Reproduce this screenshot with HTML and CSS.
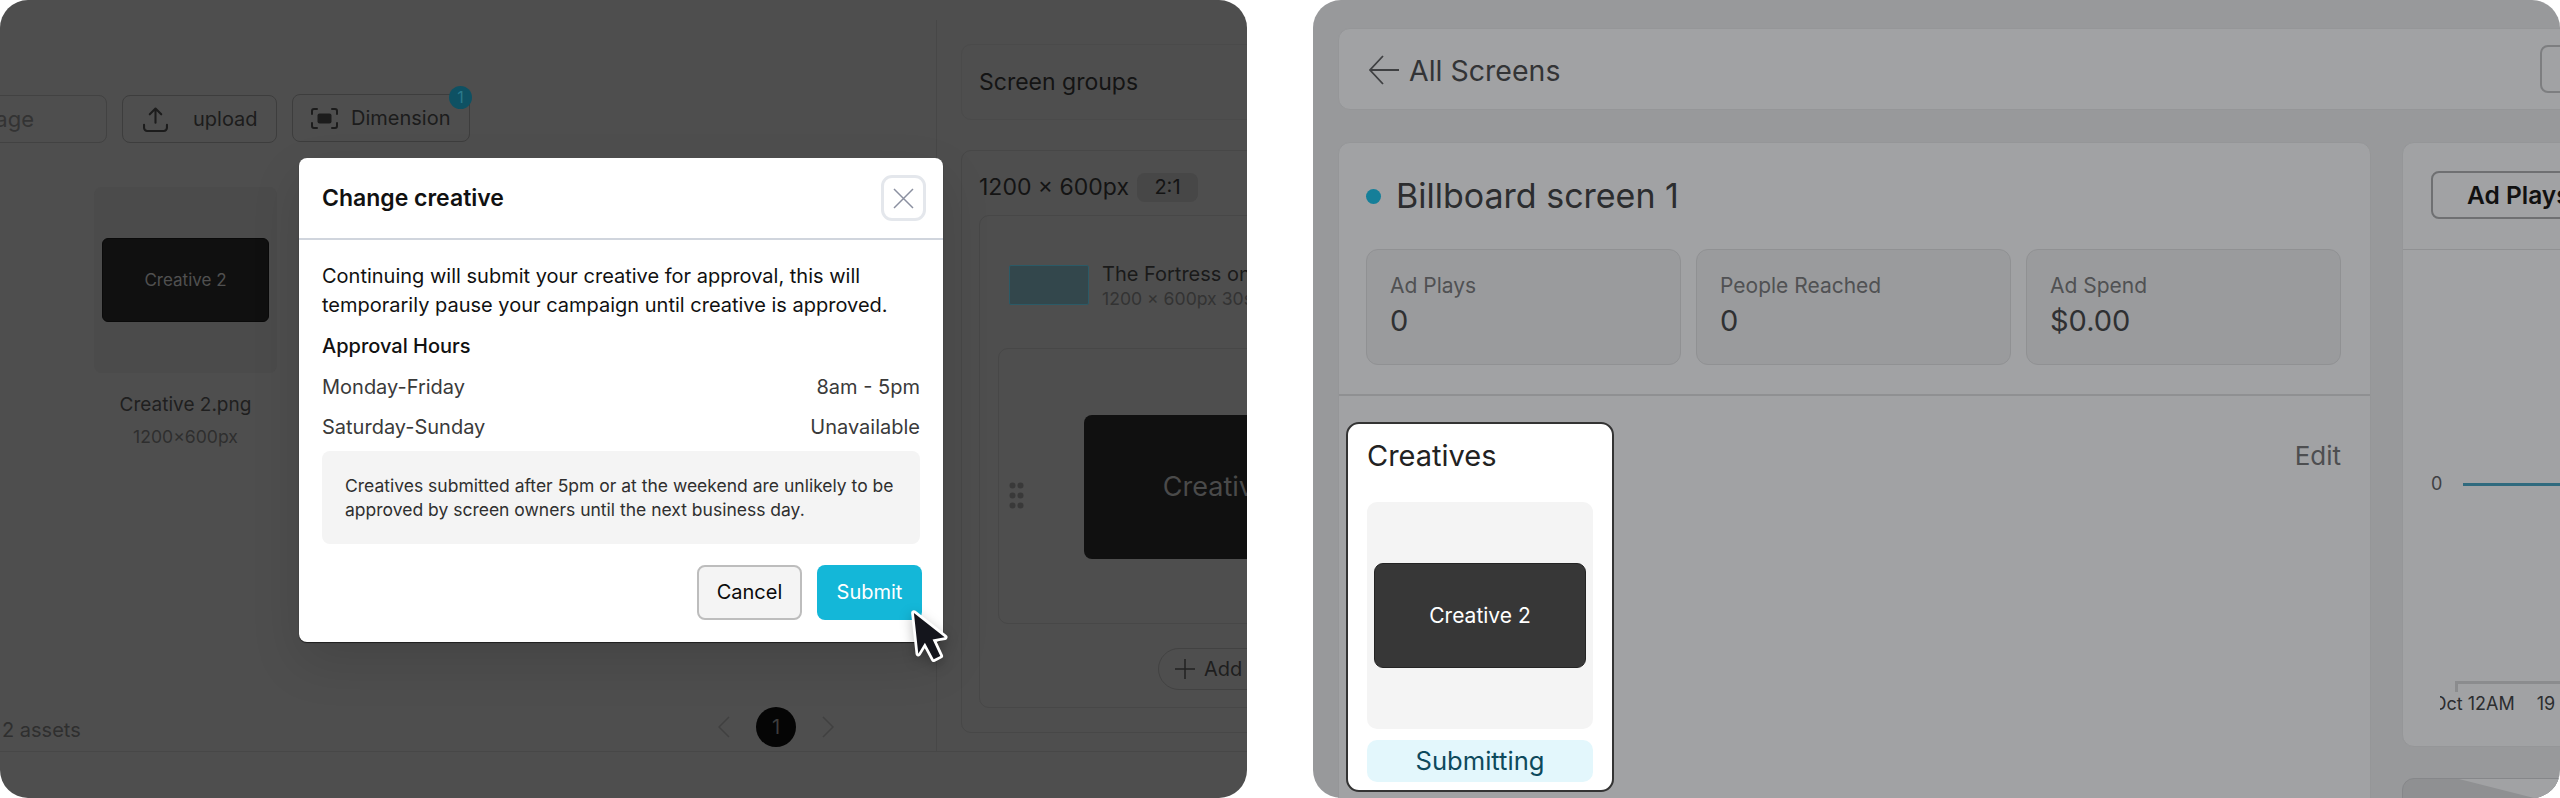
FILE: index.html
```html
<!DOCTYPE html>
<html lang="en">
<head>
<meta charset="utf-8">
<title>Change creative</title>
<link rel="stylesheet" href="styles.css">
</head>
<body>
<section class="panel panel-dark">
  <div class="dark-inner">
    <div class="assets">
      <div class="toolbar">
        <div class="search">Search by image</div>
        <div class="tool tool-upload">
          <svg class="ico-upload" viewBox="0 0 24 24" fill="none" stroke="#1c1c1c" stroke-width="2" stroke-linecap="round" stroke-linejoin="round"><path d="M12 15V1.5M6.5 7 12 1.5 17.500 7"/><path d="M1 17v3a3 3 0 0 0 3 3h16a3 3 0 0 0 3-3v-3"/></svg>
          <span>upload</span>
        </div>
        <div class="tool tool-dim">
          <svg class="ico-dim" viewBox="0 0 27 21" fill="none" stroke="#1c1c1c" stroke-width="2" stroke-linecap="round"><path d="M6 1H3a2 2 0 0 0-2 2v3M21 1h3a2 2 0 0 1 2 2v3M6 20H3a2 2 0 0 1-2-2v-3M21 20h3a2 2 0 0 0 2-2v-3"/><rect x="6.500" y="5.500" width="14" height="10" rx="2" fill="#1c1c1c" stroke="none"/></svg>
          <span>Dimension</span>
          <b class="badge">1</b>
        </div>
      </div>
      <div class="asset">
        <div class="asset-tile"><div class="asset-thumb">Creative 2</div></div>
        <div class="asset-name">Creative 2.png</div>
        <div class="asset-size">1200×600px</div>
      </div>
      <div class="asset-foot">
        <div class="count">2 assets</div>
        <div class="pager">
          <svg class="chev" viewBox="0 0 12 24" fill="none" stroke="#404040" stroke-width="1.500"><path d="M11 2 1 12l10 10"/></svg>
          <div class="page">1</div>
          <svg class="chev" viewBox="0 0 12 24" fill="none" stroke="#404040" stroke-width="1.500"><path d="m1 2 10 10L1 22"/></svg>
        </div>
      </div>
    </div>
    <div class="groups">
      <div class="groups-head">Screen groups</div>
      <div class="group">
        <div class="group-title"><span>1200 × 600px</span><span class="ratio">2:1</span></div>
        <div class="group-body">
          <div class="campaign">
            <div class="campaign-thumb"></div>
            <div>
              <div class="campaign-name">The Fortress on the hill</div>
              <div class="campaign-meta">1200 × 600px 30s</div>
            </div>
          </div>
          <div class="slot">
            <svg class="grip" viewBox="0 0 15 27" fill="#393939"><circle cx="3.500" cy="3.500" r="3"/><circle cx="11.500" cy="3.500" r="3"/><circle cx="3.500" cy="13.500" r="3"/><circle cx="11.500" cy="13.500" r="3"/><circle cx="3.500" cy="23.500" r="3"/><circle cx="11.500" cy="23.500" r="3"/></svg>
            <div class="slot-thumb">Creative 2</div>
          </div>
          <div class="add-row">
            <div class="add">
              <svg class="plus" viewBox="0 0 20 20" fill="none" stroke="#222" stroke-width="1.500"><path d="M10 0v20M0 10h20"/></svg>
              <span>Add creative</span>
            </div>
          </div>
        </div>
      </div>
    </div>
  </div>

  <div class="modal">
    <header class="modal-head">
      <h2>Change creative</h2>
      <div class="close">
        <svg viewBox="0 0 21 21" fill="none" stroke="#8b90a0" stroke-width="1.500"><path d="m1 1 19 19M20 1 1 20"/></svg>
      </div>
    </header>
    <div class="modal-body">
      <p class="lead">Continuing will submit your creative for approval, this will temporarily pause your campaign until creative is approved.</p>
      <div class="hours-title">Approval Hours</div>
      <div class="hours hours-first"><span>Monday-Friday</span><span>8am - 5pm</span></div>
      <div class="hours hours-next"><span>Saturday-Sunday</span><span>Unavailable</span></div>
      <div class="note">Creatives submitted after 5pm or at the weekend are unlikely to be approved by screen owners until the next business day.</div>
      <div class="actions">
        <div class="btn btn-cancel">Cancel</div>
        <div class="btn btn-submit">Submit</div>
      </div>
    </div>
  </div>

  <svg class="cursor" viewBox="0 0 50 60"><path d="M9 10 37 32 26 34 33 49 27 52 19 37 13 47Z" fill="#14151c" stroke="#fff" stroke-width="5" stroke-linejoin="round" paint-order="stroke"/></svg>
</section>

<section class="panel panel-light">
  <div class="topbar">
    <div class="back">
      <svg class="arrow" viewBox="0 0 30 30" fill="none" stroke="#3f4042" stroke-width="1.800"><path d="M30 15H1M14 1 1 15l13 14"/></svg>
      <span>All Screens</span>
    </div>
    <div class="topbtn"></div>
  </div>
  <div class="columns">
    <div class="screen">
      <div class="screen-title"><i class="dot"></i><h1>Billboard screen 1</h1></div>
      <div class="stats">
        <div class="stat"><div class="stat-label">Ad Plays</div><div class="stat-value">0</div></div>
        <div class="stat"><div class="stat-label">People Reached</div><div class="stat-value">0</div></div>
        <div class="stat"><div class="stat-label">Ad Spend</div><div class="stat-value">$0.00</div></div>
      </div>
      <div class="creatives">
        <div class="creative-col">
          <div class="spot">
            <h3>Creatives</h3>
            <div class="spot-tile"><div class="spot-thumb">Creative 2</div></div>
            <div class="spot-status">Submitting</div>
          </div>
          <div class="spot-name">Creative 2.png</div>
        </div>
        <div class="edit">Edit</div>
      </div>
    </div>
    <div class="side">
      <div class="chart">
        <div class="chart-head"><div class="metric">Ad Plays</div></div>
        <div class="series"><span class="y0">0</span><i class="line"></i></div>
        <div class="axis"></div>
        <div class="ticks"><div class="ticks-in"><span>10 Oct 12AM</span><span>19</span></div></div>
      </div>
      <div class="side-next">
        <svg class="wedge" viewBox="0 0 158 20" preserveAspectRatio="none"><polygon points="56,0 135,20 158,20 158,0" fill="#a1a2a4"/></svg>
      </div>
    </div>
  </div>
</section>
</body>
</html>
```
FILE: styles.css
```css
* { box-sizing: border-box; }
html, body { margin: 0; height: 798px; overflow: hidden; background: #fff; }
body {
  display: flex;
  gap: 66px;
  font-family: Inter, "Liberation Sans", sans-serif;
  color: #222;
}
h1, h2, h3, p { margin: 0; font-weight: 400; }

.panel {
  position: relative;
  width: 1247px;
  height: 798px;
  flex: none;
  overflow: hidden;
  border-radius: 28px;
}

/* dark panel */
.panel-dark { background: #4e4e4e; padding-top: 20px; }
.dark-inner {
  display: flex;
  height: 732px;
  border-bottom: 1px solid #474747;
}
.assets {
  width: 937px;
  flex: none;
  display: flex;
  flex-direction: column;
  border-right: 1px solid #474747;
  padding-top: 74px;
}
.toolbar { display: flex; align-items: flex-start; gap: 15px; }
.search {
  width: 300px;
  margin-left: -193px;
  height: 48px;
  line-height: 46px;
  border: 1px solid #424242;
  border-radius: 8px;
  text-align: right;
  padding-right: 72px;
  font-size: 22px;
  color: #333;
  white-space: nowrap;
  overflow: hidden;
  margin-top: 1px;
}
.tool {
  position: relative;
  height: 48px;
  display: flex;
  align-items: center;
  border: 1px solid #3d3d3d;
  border-radius: 8px;
  font-size: 20px;
  font-weight: 400;
  color: #1c1c1c;
}
.tool-upload { width: 155px; padding-left: 20px; gap: 25px; margin-top: 1px; }
.tool-dim { width: 178px; padding-left: 18px; gap: 13px; }
.ico-upload { width: 25px; height: 25px; flex: none; }
.ico-dim { width: 27px; height: 21px; flex: none; }
.badge {
  position: absolute;
  right: -3px;
  top: -9px;
  width: 23px;
  height: 23px;
  border-radius: 50%;
  background: #0e5163;
  color: #2a7a8c;
  font-size: 16px;
  font-weight: 400;
  text-align: center;
  line-height: 23px;
}
.asset { width: 183px; margin: 44px 0 0 94px; text-align: center; }
.asset-tile {
  height: 186px;
  background: #4b4b4b;
  border-radius: 8px;
  display: flex;
  align-items: center;
  justify-content: center;
}
.asset-thumb {
  width: 167px;
  height: 84px;
  background: #101010;
  border-radius: 6px;
  border: 1px solid #0a0a0a;
  color: #505050;
  font-size: 17px;
  line-height: 82px;
}
.asset-name { margin-top: 21px; font-size: 19px; line-height: 22px; color: #1f1f1f; white-space: nowrap; }
.asset-size { margin-top: 11px; font-size: 17.600px; line-height: 20px; color: #2e2e2e; }
.asset-foot {
  margin-top: auto;
  height: 48px;
  display: flex;
  align-items: center;
}
.count { width: 718px; padding: 6px 0 0 2px; font-size: 20px; color: #2f2f2f; flex: none; }
.pager { display: flex; align-items: center; }
.chev { width: 12px; height: 24px; flex: none; }
.page {
  width: 40px;
  height: 40px;
  margin: 0 26px 0 26px;
  border-radius: 50%;
  background: #050505;
  color: #3d3d3d;
  font-size: 20px;
  line-height: 40px;
  text-align: center;
}
.groups { flex: none; width: 420px; padding: 24px 0 0 24px; }
.groups-head {
  height: 76px;
  line-height: 74px;
  padding-left: 17px;
  font-size: 23px;
  color: #141414;
  border: 1px solid #4a4a4a;
  border-radius: 10px;
}
.group {
  margin-top: 30px;
  height: 583px;
  padding: 21px 0 0 17px;
  border: 1px solid #474747;
  border-radius: 10px;
}
.group-title { display: flex; align-items: center; gap: 8px; height: 30px; font-size: 23px; color: #141414; white-space: nowrap; }
.ratio {
  width: 61px;
  height: 29px;
  line-height: 29px;
  text-align: center;
  border-radius: 8px;
  background: #474747;
  font-size: 20px;
}
.group-body {
  margin-top: 13px;
  height: 493px;
  border: 1px solid #474747;
  border-radius: 10px;
  padding-top: 49px;
}
.campaign { display: flex; gap: 13px; padding-left: 29px; height: 40px; white-space: nowrap; }
.campaign-thumb { width: 80px; height: 40px; flex: none; background: #33474c; border: 1px solid #2b5a66; border-radius: 2px; }
.campaign-name { font-size: 20px; line-height: 20px; font-weight: 400; color: #1a1a1a; margin-top: -1px; }
.campaign-meta { font-size: 17.600px; line-height: 20px; margin-top: 5px; color: #333; }
.slot {
  margin: 43px 0 0 18px;
  height: 276px;
  border: 1px solid #474747;
  border-radius: 10px;
  display: flex;
  align-items: center;
  padding-left: 10px;
}
.grip { width: 15px; height: 27px; flex: none; margin-right: 60px; margin-top: 18px; }
.slot-thumb {
  width: 288px;
  height: 144px;
  flex: none;
  background: #101010;
  border-radius: 8px;
  font-size: 27px;
  line-height: 144px;
  text-align: center;
  color: #4a4a4a;
  margin-top: 2px;
}
.add-row { margin-top: 24px; padding-left: 178px; }
.add {
  display: flex;
  align-items: center;
  gap: 9px;
  width: 190px;
  height: 42px;
  padding-left: 16px;
  border: 1px solid #424242;
  border-radius: 21px;
  font-size: 20px;
  color: #1e1e1e;
  white-space: nowrap;
}
.plus { width: 20px; height: 20px; flex: none; }

/* modal */
.modal {
  position: absolute;
  left: 299px;
  top: 158px;
  width: 644px;
  background: #fff;
  border-radius: 8px;
  box-shadow: 0 1px 1px #1e1e1e, 0 20px 50px rgba(0, 0, 0, 0.12);
}
.modal-head {
  height: 82px;
  display: flex;
  align-items: center;
  justify-content: space-between;
  padding: 0 17px 0 23px;
  border-bottom: 2px solid #d0d5dd;
}
.modal-head h2 { font-size: 23px; font-weight: 600; color: #111; }
.close {
  width: 45px;
  height: 46px;
  border: 3px solid #e4e7ec;
  border-radius: 11px;
  display: flex;
  align-items: center;
  justify-content: center;
}
.close svg { width: 21px; height: 21px; }
.modal-body { padding: 22px 23px 22px; font-size: 20px; color: #111; }
.lead { line-height: 29px; }
.hours-title { margin-top: 13px; line-height: 26px; font-weight: 450; }
.hours { display: flex; justify-content: space-between; line-height: 26px; color: #3a3a3a; }
.hours-first { margin-top: 15px; }
.hours-next { margin-top: 14px; }
.note {
  margin-top: 11px;
  height: 93px;
  padding: 23px 23px 0;
  background: #f4f4f4;
  border-radius: 8px;
  font-size: 17.500px;
  line-height: 23.500px;
  color: #2f2f2f;
}
.actions { display: flex; justify-content: flex-end; gap: 15px; margin: 21px -2px 0 0; }
.btn { width: 105px; height: 55px; line-height: 53px; text-align: center; border-radius: 8px; border: 1px solid transparent; }
.btn-cancel { background: #f4f4f4; border: 2px solid #bdbdbd; line-height: 51px; color: #0a0a0a; }
.btn-submit { background: #14b7d8; color: #fff; }
.cursor {
  position: absolute;
  left: 904px;
  top: 602px;
  width: 55px;
  height: 66px;
  filter: drop-shadow(0 4px 6px rgba(0, 0, 0, 0.25));
}

/* light panel */
.panel-light { background: #98999b; padding: 28px 0 0 25px; }
.topbar {
  width: 1303px;
  height: 82px;
  display: flex;
  align-items: center;
  background: #a1a2a4;
  border: 1px solid #959698;
  border-radius: 12px;
}
.back { flex: 1; display: flex; align-items: center; gap: 10px; padding: 2px 0 0 30px; font-size: 28.500px; color: #333436; }
.arrow { width: 30px; height: 30px; flex: none; }
.topbtn { width: 100px; height: 48px; border: 2px solid #7d7e80; border-radius: 8px; }
.columns { display: flex; gap: 31px; margin-top: 32px; }
.screen {
  width: 1033px;
  height: 700px;
  flex: none;
  background: #a1a2a4;
  border: 1px solid #959698;
  border-radius: 12px;
}
.screen-title { display: flex; align-items: center; gap: 15px; padding: 33px 0 0 27px; }
.dot { width: 15px; height: 15px; border-radius: 50%; background: #157f99; flex: none; }
.screen-title h1 { font-size: 34px; line-height: 40px; color: #2c2d2f; }
.stats { display: flex; gap: 15px; margin: 33px 0 0 27px; }
.stat {
  width: 315px;
  height: 116px;
  padding: 24px 23px 0;
  background: #9a9b9d;
  border: 1px solid #909193;
  border-radius: 12px;
}
.stat-label { font-size: 21px; line-height: 24px; color: #505153; }
.stat-value { margin-top: 5px; font-size: 29px; line-height: 36px; color: #2f3032; }
.creatives {
  margin-top: 29px;
  padding: 26px 29px 0 7px;
  border-top: 2px solid #8f9092;
  display: flex;
  justify-content: space-between;
  align-items: flex-start;
}
.creative-col { width: 268px; text-align: center; }
.spot {
  height: 370px;
  padding: 16px 19px 0;
  background: #fff;
  border: 2px solid #333;
  border-radius: 13px;
  text-align: left;
}
.spot h3 { font-size: 29px; line-height: 32px; font-weight: 400; color: #222; }
.spot-tile {
  margin-top: 30px;
  height: 227px;
  background: #f4f4f4;
  border-radius: 10px;
  display: flex;
  align-items: center;
  justify-content: center;
}
.spot-thumb {
  width: 212px;
  height: 105px;
  background: #373737;
  border: 1px solid #242424;
  border-radius: 9px;
  color: #fff;
  font-size: 21px;
  line-height: 103px;
  text-align: center;
  margin-top: -1px;
}
.spot-status {
  margin-top: 11px;
  height: 42px;
  line-height: 42px;
  border-radius: 10px;
  background: #e3f7fc;
  color: #0e4a5c;
  font-size: 25.600px;
  text-align: center;
}
.spot-name { margin-top: 3px; font-size: 18px; line-height: 22px; color: #55565a; white-space: nowrap; }
.edit { margin-top: 19px; font-size: 26px; line-height: 30px; color: #4d4e50; }
.side { flex: none; width: 200px; display: flex; flex-direction: column; gap: 31px; }
.chart {
  height: 605px;
  background: #a1a2a4;
  border: 1px solid #959698;
  border-radius: 12px;
  overflow: hidden;
}
.chart-head { height: 107px; padding: 28px 0 0 28px; border-bottom: 1px solid #909193; }
.metric {
  width: 190px;
  height: 48px;
  line-height: 44px;
  padding-left: 34px;
  border: 2px solid #6f7072;
  border-radius: 8px;
  font-size: 24.500px;
  font-weight: 600;
  color: #111;
  white-space: nowrap;
}
.series { display: flex; align-items: center; gap: 23px; margin: 224px 0 0 28px; height: 20px; }
.y0 { font-size: 18px; line-height: 20px; color: #3f4042; width: 9px; }
.line { flex: 1; height: 3px; background: #2f6a7e; }
.axis {
  margin: 187px 0 0 52px;
  height: 11px;
  border-top: 3px solid #8b8c8e;
  border-left: 3px solid #8b8c8e;
}
.ticks { margin: 1px 0 0 37px; overflow: hidden; font-size: 18px; line-height: 22px; color: #2c2d2f; white-space: nowrap; }
.ticks-in { display: flex; gap: 22px; margin-left: -31px; }
.side-next {
  height: 40px;
  background: #8f9092;
  border: 1px solid #86878a;
  border-radius: 12px;
  overflow: hidden;
}
.wedge { display: block; width: 158px; height: 20px; }
```
